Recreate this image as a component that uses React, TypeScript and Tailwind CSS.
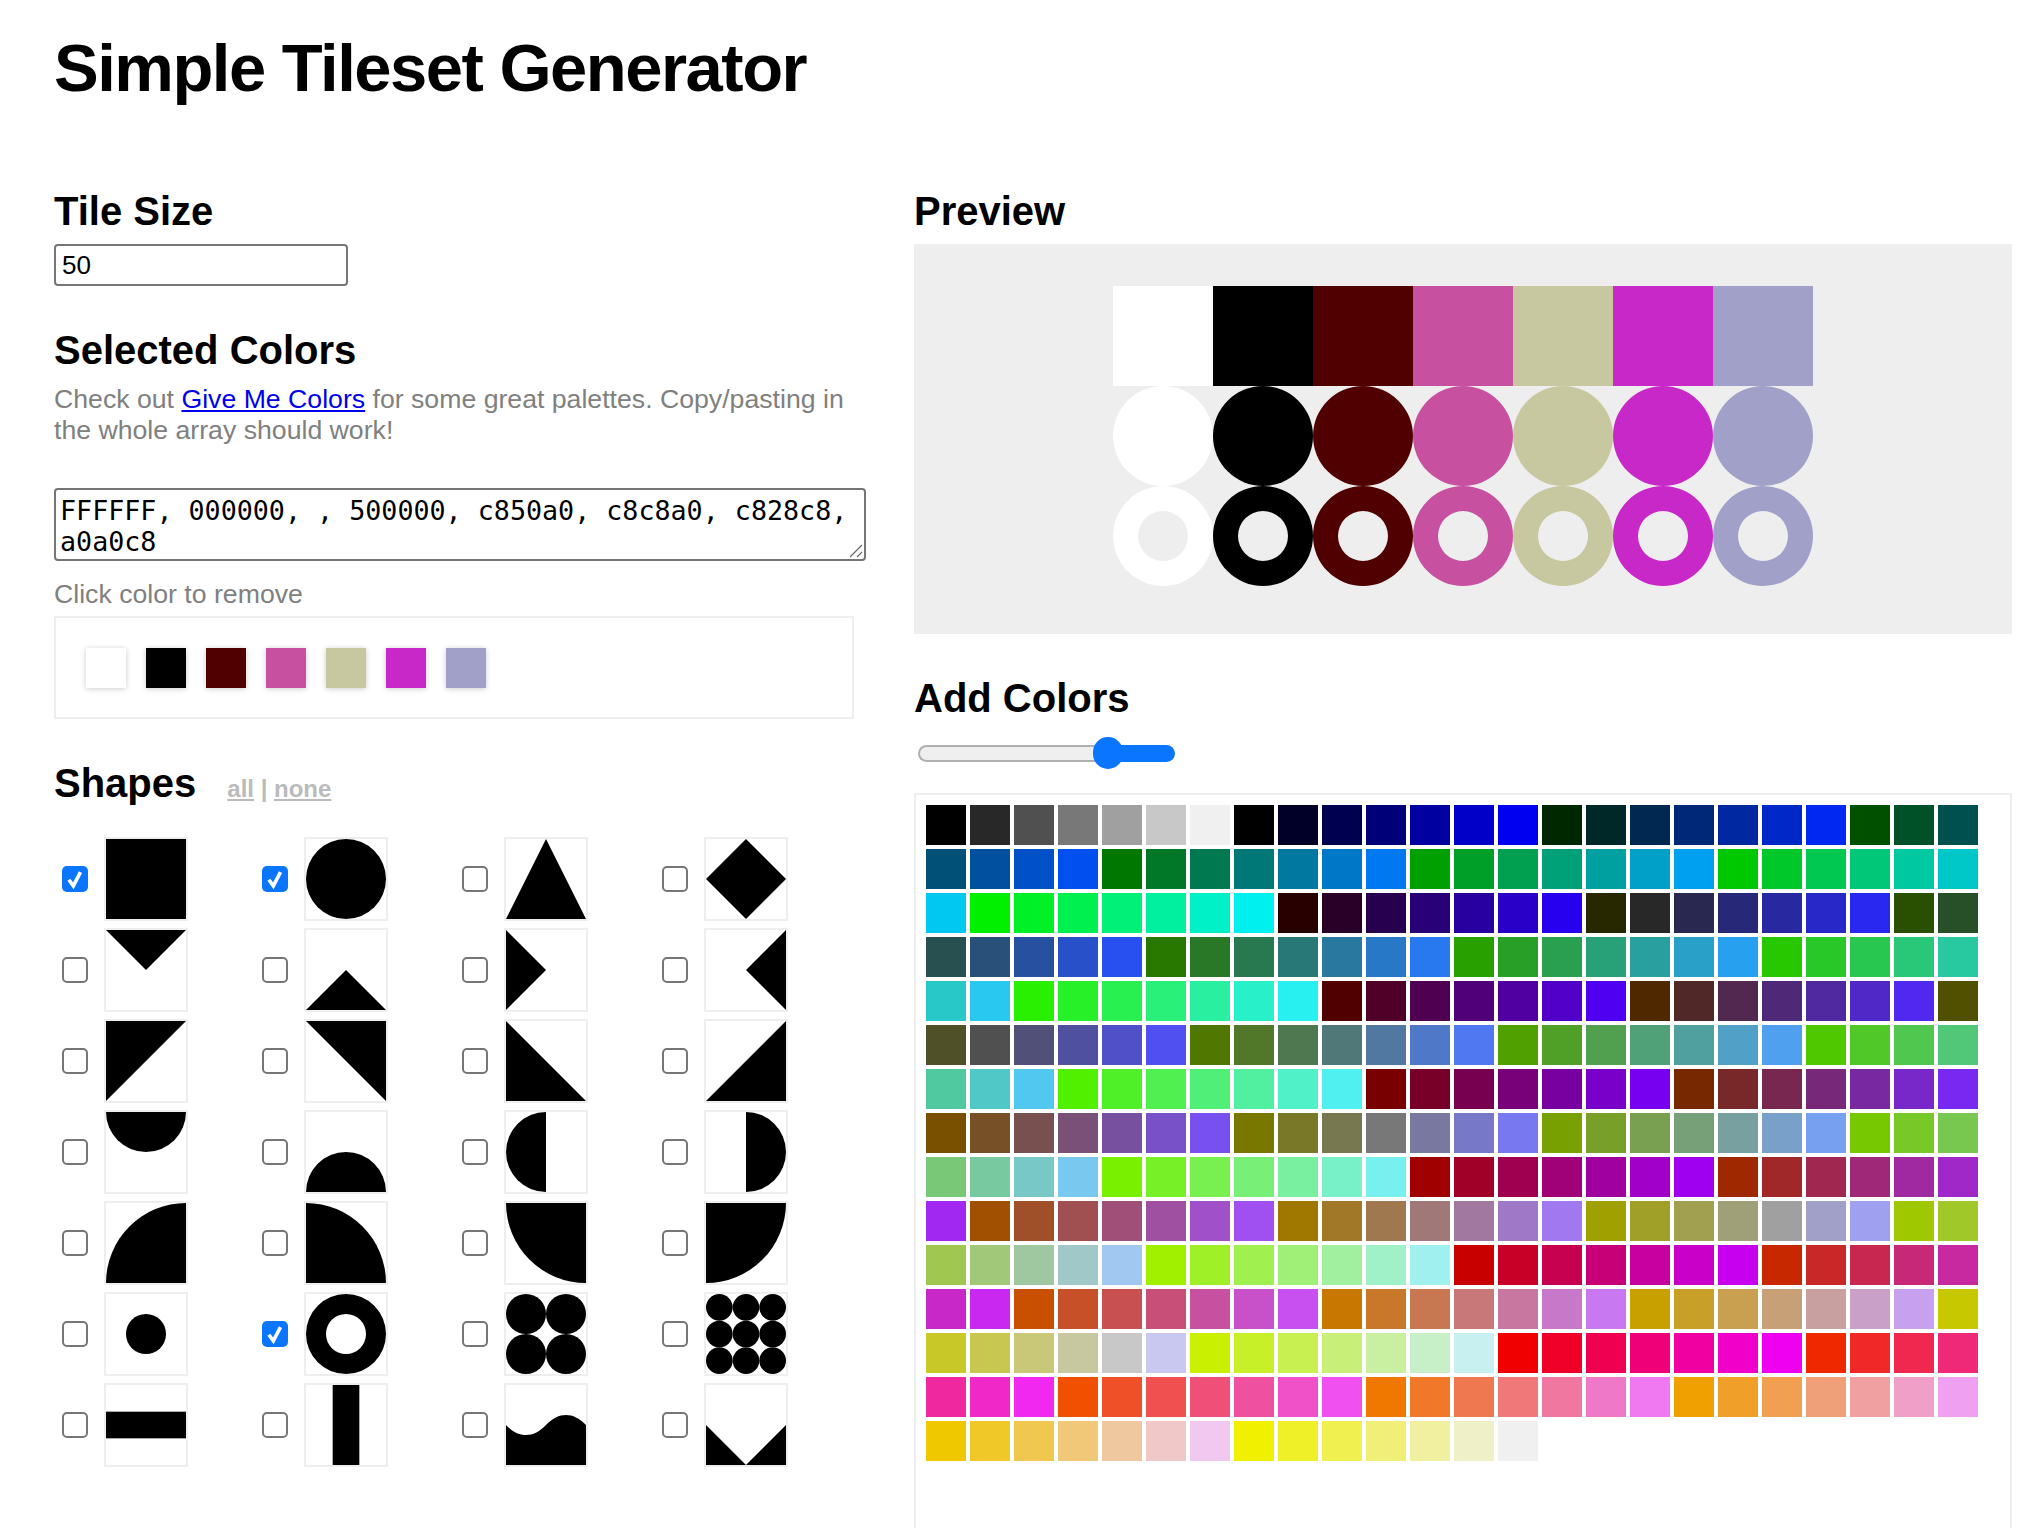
import React from "react";

const LEVELS = ["00", "28", "50", "78", "a0", "c8", "f0"];

// greys first, then every r/g/b combination
function buildPalette() {
  const colors: string[] = LEVELS.map((l) => `#${l}${l}${l}`);
  for (const r of LEVELS) {
    for (const g of LEVELS) {
      for (const b of LEVELS) {
        colors.push(`#${r}${g}${b}`);
      }
    }
  }
  return colors;
}

const PALETTE = buildPalette();
const SELECTED = ["#ffffff", "#000000", "#500000", "#c850a0", "#c8c8a0", "#c828c8", "#a0a0c8"];
const CHECKED = ["square", "circle", "ring"];

const SHAPES: Record<string, React.ReactNode> = {
  square: <rect width="80" height="80" />,
  circle: <circle cx="40" cy="40" r="40" />,
  triangle: <polygon points="40,0 80,80 0,80" />,
  diamond: <polygon points="40,0 80,40 40,80 0,40" />,
  triTop: <polygon points="0,0 80,0 40,40" />,
  triBottom: <polygon points="0,80 80,80 40,40" />,
  triLeft: <polygon points="0,0 40,40 0,80" />,
  triRight: <polygon points="80,0 40,40 80,80" />,
  cornerTL: <polygon points="0,0 80,0 0,80" />,
  cornerTR: <polygon points="0,0 80,0 80,80" />,
  cornerBL: <polygon points="0,0 80,80 0,80" />,
  cornerBR: <polygon points="80,0 80,80 0,80" />,
  halfTop: <path d="M0 0H80A40 40 0 0 1 0 0Z" />,
  halfBottom: <path d="M0 80A40 40 0 0 1 80 80Z" />,
  halfLeft: <path d="M40 0V80A40 40 0 0 1 40 0Z" />,
  halfRight: <path d="M40 0A40 40 0 0 1 40 80Z" />,
  quarterA: <path d="M0 80A80 80 0 0 1 80 0V80Z" />,
  quarterB: <path d="M0 0A80 80 0 0 1 80 80H0Z" />,
  quarterC: <path d="M0 0H80V80A80 80 0 0 1 0 0Z" />,
  quarterD: <path d="M0 0H80A80 80 0 0 1 0 80Z" />,
  dot: <circle cx="40" cy="40" r="20" />,
  ring: <path fillRule="evenodd" d="M0 40A40 40 0 0 1 80 40A40 40 0 0 1 0 40ZM20 40A20 20 0 0 0 60 40A20 20 0 0 0 20 40Z" />,
  four: (
    <>
      <circle cx="20" cy="20" r="20" />
      <circle cx="60" cy="20" r="20" />
      <circle cx="20" cy="60" r="20" />
      <circle cx="60" cy="60" r="20" />
    </>
  ),
  nine: (
    <>
      {[13.33, 40, 66.67].map((y) =>
        [13.33, 40, 66.67].map((x) => <circle key={`${x}-${y}`} cx={x} cy={y} r="13.33" />)
      )}
    </>
  ),
  hbar: <rect y="26.67" width="80" height="26.67" />,
  vbar: <rect x="26.67" width="26.67" height="80" />,
  wave: <path d="M0 40C7 47 13 50 20 50C27 50 33 47 40 40C47 33 53 30 60 30C67 30 73 33 80 40V80H0Z" />,
  notch: <polygon points="0,40 40,80 80,40 80,80 0,80" />,
};

function Shape({ name, color = "#000000" }: { name: string; color?: string }) {
  return (
    <svg viewBox="0 0 80 80" fill={color} className="block w-full h-full">
      {SHAPES[name]}
    </svg>
  );
}

function Checkbox({ checked }: { checked: boolean }) {
  if (checked) {
    return (
      <span className="flex items-center justify-center w-[26px] h-[26px] rounded-[5px] bg-[#0a76ff]">
        <svg viewBox="0 0 16 16" className="w-[22px] h-[22px]" fill="none" stroke="white" strokeWidth="2.6">
          <path d="M3.5 8.5L6.8 13L12 3" />
        </svg>
      </span>
    );
  }
  return <span className="block w-[26px] h-[26px] rounded-[5px] border-2 border-[#767676] bg-white" />;
}

function H2({ children, className = "" }: { children: React.ReactNode; className?: string }) {
  return <h2 className={`text-[40px] leading-[46px] font-bold text-black ${className}`}>{children}</h2>;
}

export default function App() {
  return (
    <div className="h-[1528px] overflow-hidden bg-white pl-[54px] pt-[29px] font-['Liberation_Sans',Arial,sans-serif] flex flex-col">
      <h1 className="text-[67px] leading-[78px] tracking-[-1.5px] font-bold text-black mb-[81px]">Simple Tileset Generator</h1>

      <div className="flex flex-1 min-h-0">
        <div className="w-[860px] shrink-0">
          <H2>Tile Size</H2>
          <input
            defaultValue="50"
            className="block mt-[10px] w-[294px] h-[42px] px-[6px] rounded-[4px] border-2 border-[#767676] text-[26px] text-black"
          />

          <H2 className="mt-[41px]">Selected Colors</H2>
          <p className="mt-[11px] w-[811px] text-[26.67px] leading-[31px] text-[#808080]">
            Check out{" "}
            <a href="#colors" className="text-[#0000ee] underline">
              Give Me Colors
            </a>{" "}
            for some great palettes. Copy/pasting in the whole array should work!
          </p>
          <div className="relative mt-[42px] w-[812px] h-[73px]">
            <textarea
              defaultValue="FFFFFF, 000000, , 500000, c850a0, c8c8a0, c828c8, a0a0c8"
              className="block w-full h-full resize-none px-[4px] pt-[5px] rounded-[4px] border-2 border-[#767676] font-['DejaVu_Sans_Mono',monospace] text-[26.7px] leading-[31px] text-black"
            />
            <svg viewBox="0 0 14 14" className="absolute right-[3px] bottom-[3px] w-[14px] h-[14px]" fill="none" stroke="#666666" strokeWidth="1.2">
              <path d="M1 13L13 1M8 13L13 8" />
            </svg>
          </div>
          <p className="mt-[18px] text-[26.67px] leading-[31px] text-[#808080]">Click color to remove</p>
          <div className="mt-[6px] w-[800px] h-[103px] border-2 border-[#eeeeee] flex items-center gap-[20px] pl-[30px]">
            {SELECTED.map((c) => (
              <div key={c} className="w-[40px] h-[40px] shadow-[0_1px_6px_rgba(0,0,0,0.2)]" style={{ backgroundColor: c }} />
            ))}
          </div>

          <div className="mt-[41px] flex items-baseline gap-[31px]">
            <H2>Shapes</H2>
            <div className="text-[24px] font-bold text-[#bbbbbb]">
              <a href="#all" className="underline">all</a> | <a href="#none" className="underline">none</a>
            </div>
          </div>

          <div className="mt-[30px] grid grid-cols-[repeat(4,200px)] gap-y-[7px]">
            {Object.keys(SHAPES).map((name) => (
              <div key={name} className="flex items-center pl-[8px] gap-[16px]">
                <Checkbox checked={CHECKED.includes(name)} />
                <div className="w-[84px] h-[84px] border-2 border-[#eeeeee]">
                  <Shape name={name} />
                </div>
              </div>
            ))}
          </div>
        </div>

        <div className="w-[1098px] shrink-0 flex flex-col">
          <H2>Preview</H2>
          <div className="mt-[10px] h-[390px] bg-[#eeeeee] pt-[42px] flex justify-center">
            <div className="grid grid-cols-[repeat(7,100px)] auto-rows-[100px] h-[300px]">
              {["square", "circle", "ring"].map((name) =>
                SELECTED.map((c) => (
                  <div key={name + c}>
                    <Shape name={name} color={c} />
                  </div>
                ))
              )}
            </div>
          </div>

          <H2 className="mt-[41px]">Add Colors</H2>
          <div className="relative mt-[16px] ml-[4px] w-[257px] h-[32px] flex items-center">
            <div className="w-[189px] h-[17px] rounded-l-full border-2 border-r-0 border-[#b0b0b0] bg-[#efefef]" />
            <div className="w-[68px] h-[17px] rounded-r-full bg-[#0a76ff]" />
            <div className="absolute left-[175px] top-0 w-[30px] h-[32px] rounded-full bg-[#0a76ff]" />
          </div>

          <div className="mt-[24px] flex-1 border-2 border-b-0 border-[#eeeeee] pl-[10px] pt-[10px]">
            <div className="grid grid-cols-[repeat(24,40px)] auto-rows-[40px] gap-[4px]">
              {PALETTE.map((c, i) => (
                <div key={i} style={{ backgroundColor: c }} />
              ))}
            </div>
          </div>
        </div>
      </div>
    </div>
  );
}
